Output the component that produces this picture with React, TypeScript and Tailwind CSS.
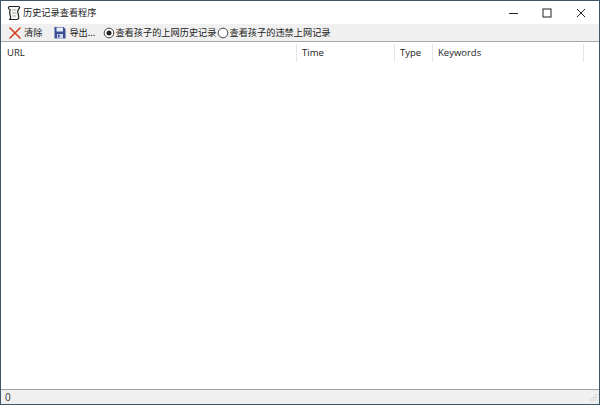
import React from "react";

const font = { fontFamily: '"Noto Sans CJK SC", "Liberation Sans", sans-serif' };

function Radio({ on }: { on: boolean }) {
  return (
    <svg width="12" height="12" viewBox="0 0 12 12" className="shrink-0">
      <circle cx="6" cy="6" r="4.800" fill="#fff" stroke="#333" strokeWidth="0.900" />
      {on && <circle cx="6" cy="6" r="2.500" fill="#222" />}
    </svg>
  );
}

function Header({ w, label, last, first }: { w: string; label?: string; last?: boolean; first?: boolean }) {
  return (
    <div className={`${w} ${last ? "flex-1" : "border-r border-[#e5e5e5]"} ${first ? "pl-[6px]" : "pl-[5px]"} h-[18px] text-[9.500px] leading-[17px] text-[#222] font-['Open_Sans',sans-serif]`}>
      {label}
    </div>
  );
}

export default function App() {
  return (
    <div className="w-[600px] h-[405px] flex flex-col bg-white border border-[#3d5866] overflow-hidden" style={font}>
      <div className="h-[23px] shrink-0 flex items-center bg-white">
        <svg width="15" height="16" viewBox="0 0 15 16" className="ml-[5px] shrink-0">
          <path d="M3.500 1.500h9c1 0 1.300.8 1 1.400L12 5.500c-.4.8-.4 1.500 0 2.500l.7 3.500c.3 1.500-.4 3-1.700 3H3c1.300 0 1.800-1 1.500-2.500L3.800 8.500c-.3-1-.3-1.800.2-3 .4-1-.3-1.400-1-1.500-1-.2-.8-2.500.5-2.500z" fill="#f6f6f2" stroke="#222" strokeWidth="1.200" />
          <path d="M6 5h4.500M6 8h4.500M6.500 11h3.500" stroke="#999" strokeWidth="0.800" />
        </svg>
        <span className="ml-[2px] -mt-[2px] text-[9.200px] leading-[14px] text-[#222]">历史记录查看程序</span>
        <div className="ml-auto mr-[1px] flex items-center h-full">
          <div className="w-[34px] h-full flex items-center justify-center">
            <svg width="9" height="10" viewBox="0 0 9 10"><path d="M0 5.500h9" stroke="#222" strokeWidth="1" /></svg>
          </div>
          <div className="w-[34px] h-full flex items-center justify-center">
            <svg width="10" height="10" viewBox="0 0 10 10"><rect x="1" y="1" width="8" height="8" fill="none" stroke="#222" strokeWidth="1" /></svg>
          </div>
          <div className="w-[34px] h-full flex items-center justify-center">
            <svg width="10" height="10" viewBox="0 0 10 10"><path d="M1 1l8 8M9 1l-8 8" stroke="#222" strokeWidth="1" /></svg>
          </div>
        </div>
      </div>
      <div className="h-[18px] shrink-0 flex items-center bg-[#f0f0f0] border-b border-[#a8a8a8] text-[9.200px] text-[#222]">
        <svg width="14" height="14" viewBox="0 0 14 14" className="ml-[7px] shrink-0">
          <path d="M1.500 1.500L12.500 12.500M12.500 1.500L1.500 12.500" stroke="#d33c20" strokeWidth="1.500" />
        </svg>
        <span className="ml-[2px]">清除</span>
        <svg width="12" height="13" viewBox="0 0 12 13" className="ml-[12px] shrink-0">
          <path d="M.5 1h9L11.500 3v9.500H.5z" fill="#3c4f96" />
          <rect x="2.500" y="1.500" width="6.500" height="4" fill="#e8ecf5" />
          <rect x="3" y="8" width="6" height="4.500" fill="#cfd5e6" />
          <rect x="4" y="8.500" width="1.500" height="3" fill="#3c4f96" />
        </svg>
        <span className="ml-[3px]">导出...</span>
        <div className="ml-[8px] flex"><Radio on /></div>
        <span>查看孩子的上网历史记录</span>
        <div className="ml-[1px] flex"><Radio on={false} /></div>
        <span>查看孩子的违禁上网记录</span>
      </div>
      <div className="flex-1 min-h-0 bg-white pt-[2px]">
        <div className="flex">
          <Header w="w-[296px]" label="URL" first />
          <Header w="w-[98px]" label="Time" />
          <Header w="w-[38px]" label="Type" />
          <Header w="w-[151px]" label="Keywords" />
          <Header w="" last />
        </div>
      </div>
      <div className="h-[15px] shrink-0 flex items-center justify-between bg-[#f0f0f0] border-t border-[#a0a0a0] text-[10px] text-[#333] font-['Open_Sans',sans-serif]">
        <span className="ml-[4px] leading-[14px]">0</span>
        <svg width="11" height="11" viewBox="0 0 11 11" className="mr-[1px] self-end">
          <path d="M8.500 1.500h1v1h-1zM6 4h1v1H6zM8.500 4h1v1h-1zM3.500 6.500h1v1h-1zM6 6.500h1v1H6zM8.500 6.500h1v1h-1z" fill="#aaa" />
        </svg>
      </div>
    </div>
  );
}
